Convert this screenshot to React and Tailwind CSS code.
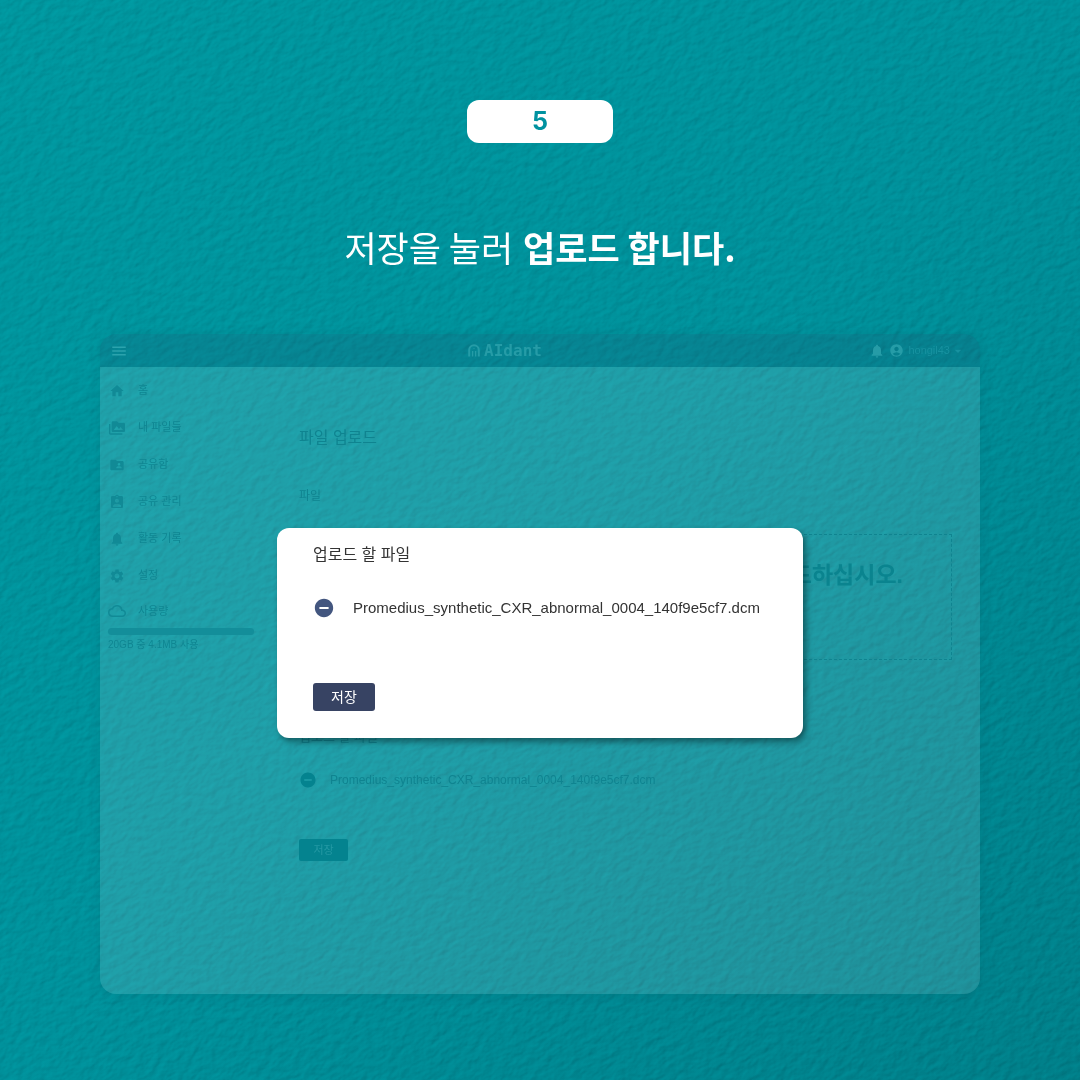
import React from "react";
import {
  MdAccountCircle,
  MdArrowDropDown,
  MdAssignmentInd,
  MdCloudQueue,
  MdFolderShared,
  MdHome,
  MdMenu,
  MdNotifications,
  MdPermMedia,
  MdRemoveCircle,
  MdSettings,
} from "react-icons/md";

const FILE_NAME = "Promedius_synthetic_CXR_abnormal_0004_140f9e5cf7.dcm";

const menuItems = [
  { label: "홈", icon: MdHome },
  { label: "내 파일들", icon: MdPermMedia },
  { label: "공유함", icon: MdFolderShared },
  { label: "공유 관리", icon: MdAssignmentInd },
  { label: "활동 기록", icon: MdNotifications },
  { label: "설정", icon: MdSettings },
];

// rough plaster wall behind everything
function WallTexture() {
  return (
    <svg className="absolute inset-0 h-full w-full opacity-45 mix-blend-soft-light" aria-hidden="true">
      <filter id="plaster" x="0" y="0" width="100%" height="100%" colorInterpolationFilters="sRGB">
        <feTurbulence type="fractalNoise" baseFrequency="0.1 0.15" numOctaves="4" seed="8" />
        <feDiffuseLighting surfaceScale="0.8" diffuseConstant="1" lightingColor="#ffffff">
          <feDistantLight azimuth="250" elevation="29" />
        </feDiffuseLighting>
      </filter>
      <g transform="rotate(-28)">
        <rect x="-1200" y="-200" width="3600" height="2800" filter="url(#plaster)" />
      </g>
    </svg>
  );
}

function LogoMark() {
  return (
    <svg viewBox="0 0 12 13" className="h-[13px] w-3" fill="none" stroke="currentColor" strokeWidth="2">
      <path d="M1.2 12.5V6a4.8 4.8 0 0 1 9.6 0v6.5" />
      <path d="M4.6 12.5V7M7.6 12.5V7" strokeWidth="1.4" />
      <circle cx="6" cy="4.6" r="0.7" fill="currentColor" stroke="none" />
    </svg>
  );
}

function TopBar() {
  return (
    <header className="flex h-[33px] items-center justify-between bg-[#1f4f70]/20 px-[10px] text-[#1792a0]">
      <button type="button" aria-label="메뉴" className="flex w-32 text-[#2ba3ad]">
        <MdMenu size={18} />
      </button>
      <div className="flex items-center gap-1 pr-[70px] text-[#259ca7]">
        <LogoMark />
        <span className="font-['DejaVu_Sans_Mono'] text-base leading-none font-bold">AIdant</span>
      </div>
      <div className="flex w-32 items-center justify-end gap-1 pr-1">
        <MdNotifications size={16} className="text-[#259ca7]" />
        <MdAccountCircle size={15} className="text-[#259ca7]" />
        <button type="button" className="flex items-center text-[11px]">
          hongil43
          <MdArrowDropDown size={16} />
        </button>
      </div>
    </header>
  );
}

function Sidebar() {
  return (
    <nav className="w-[199px] shrink-0 px-2 pt-[5px] text-[11px] text-[#0f8692]">
      <ul>
        {menuItems.map(({ label, icon: Icon }) => (
          <li key={label}>
            <a href="#" className="flex h-[37px] items-center gap-3">
              <span className="flex w-[18px] justify-center text-[#118a96]">
                <Icon size={16} />
              </span>
              {label}
            </a>
          </li>
        ))}
      </ul>
      <div className="flex h-[34px] items-center gap-3">
        <span className="flex w-[18px] justify-center text-[#118a96]">
          <MdCloudQueue size={18} />
        </span>
        사용량
      </div>
      <div className="h-[7px] w-[146px] rounded-sm bg-[#138e9a]" />
      <p className="text-[10px] leading-5">20GB 중 4.1MB 사용</p>
    </nav>
  );
}

function UploadPage() {
  return (
    <main className="flex-1 pt-[59px] pr-7 text-[#0f8490]">
      <h2 className="text-base">파일 업로드</h2>
      <p className="mt-9 text-xs leading-5">파일</p>
      <div className="mt-7 flex h-[126px] justify-end border border-dashed border-[#0f8490] pt-6 pr-12">
        <p className="text-[23px] leading-8 font-bold text-[#0a848f]">업로드하십시오.</p>
      </div>
      <p className="mt-[67px] text-[13px] leading-5">업로드 할 파일</p>
      <div className="mt-[23px] flex items-center gap-[13px]">
        <MdRemoveCircle size={18} className="text-[#04838f]" />
        <span className="text-xs leading-5">{FILE_NAME}</span>
      </div>
      <button type="button" className="mt-[49px] h-[22px] w-[49px] rounded-xs bg-[#04838f] text-[11px] text-[#2499a4]">
        저장
      </button>
    </main>
  );
}

function UploadDialog() {
  return (
    <section
      role="dialog"
      aria-label="업로드 할 파일"
      className="absolute top-[194px] left-1/2 w-[526px] -translate-x-1/2 rounded-xl bg-white px-9 pt-[15px] pb-[27px] text-[#333333] shadow-[3px_4px_6px_rgba(0,0,0,0.4)]"
    >
      <h2 className="text-base">업로드 할 파일</h2>
      <div className="mt-[29px] flex items-center gap-[18px]">
        <MdRemoveCircle size={22} className="text-[#43567f]" />
        <span className="text-[15px] leading-6 whitespace-nowrap">{FILE_NAME}</span>
      </div>
      <button type="button" className="mt-[63px] block h-7 w-[62px] rounded-[3px] bg-[#374363] text-sm text-white">
        저장
      </button>
    </section>
  );
}

export default function App() {
  return (
    <div className="relative min-h-screen overflow-hidden bg-linear-to-br from-[#00979f] via-[#00919b] to-[#007f89] font-['Liberation_Sans','Noto_Sans_CJK_KR',sans-serif]">
      <WallTexture />
      <div className="relative flex flex-col items-center px-[100px] pt-[100px] pb-[86px]">
        <div className="flex h-[43px] w-[146px] items-center justify-center rounded-xl bg-white font-['Inter',sans-serif] text-[25px] font-bold text-[#0092a0]">
          5
        </div>
        <h1 className="mt-[78px] mb-[61px] font-['Noto_Sans_CJK_KR',sans-serif] text-[35px] leading-[52px] font-normal text-white">
          저장을 눌러 <strong className="ml-0.5 font-bold">업로드 합니다.</strong>
        </h1>
        <div className="relative w-full">
          <div className="overflow-hidden rounded-2xl shadow-[0_2px_12px_rgba(0,70,80,0.15)]">
            <TopBar />
            <div className="flex min-h-[627px] bg-[#f0f5ff]/13">
              <Sidebar />
              <UploadPage />
            </div>
          </div>
          <UploadDialog />
        </div>
      </div>
    </div>
  );
}
